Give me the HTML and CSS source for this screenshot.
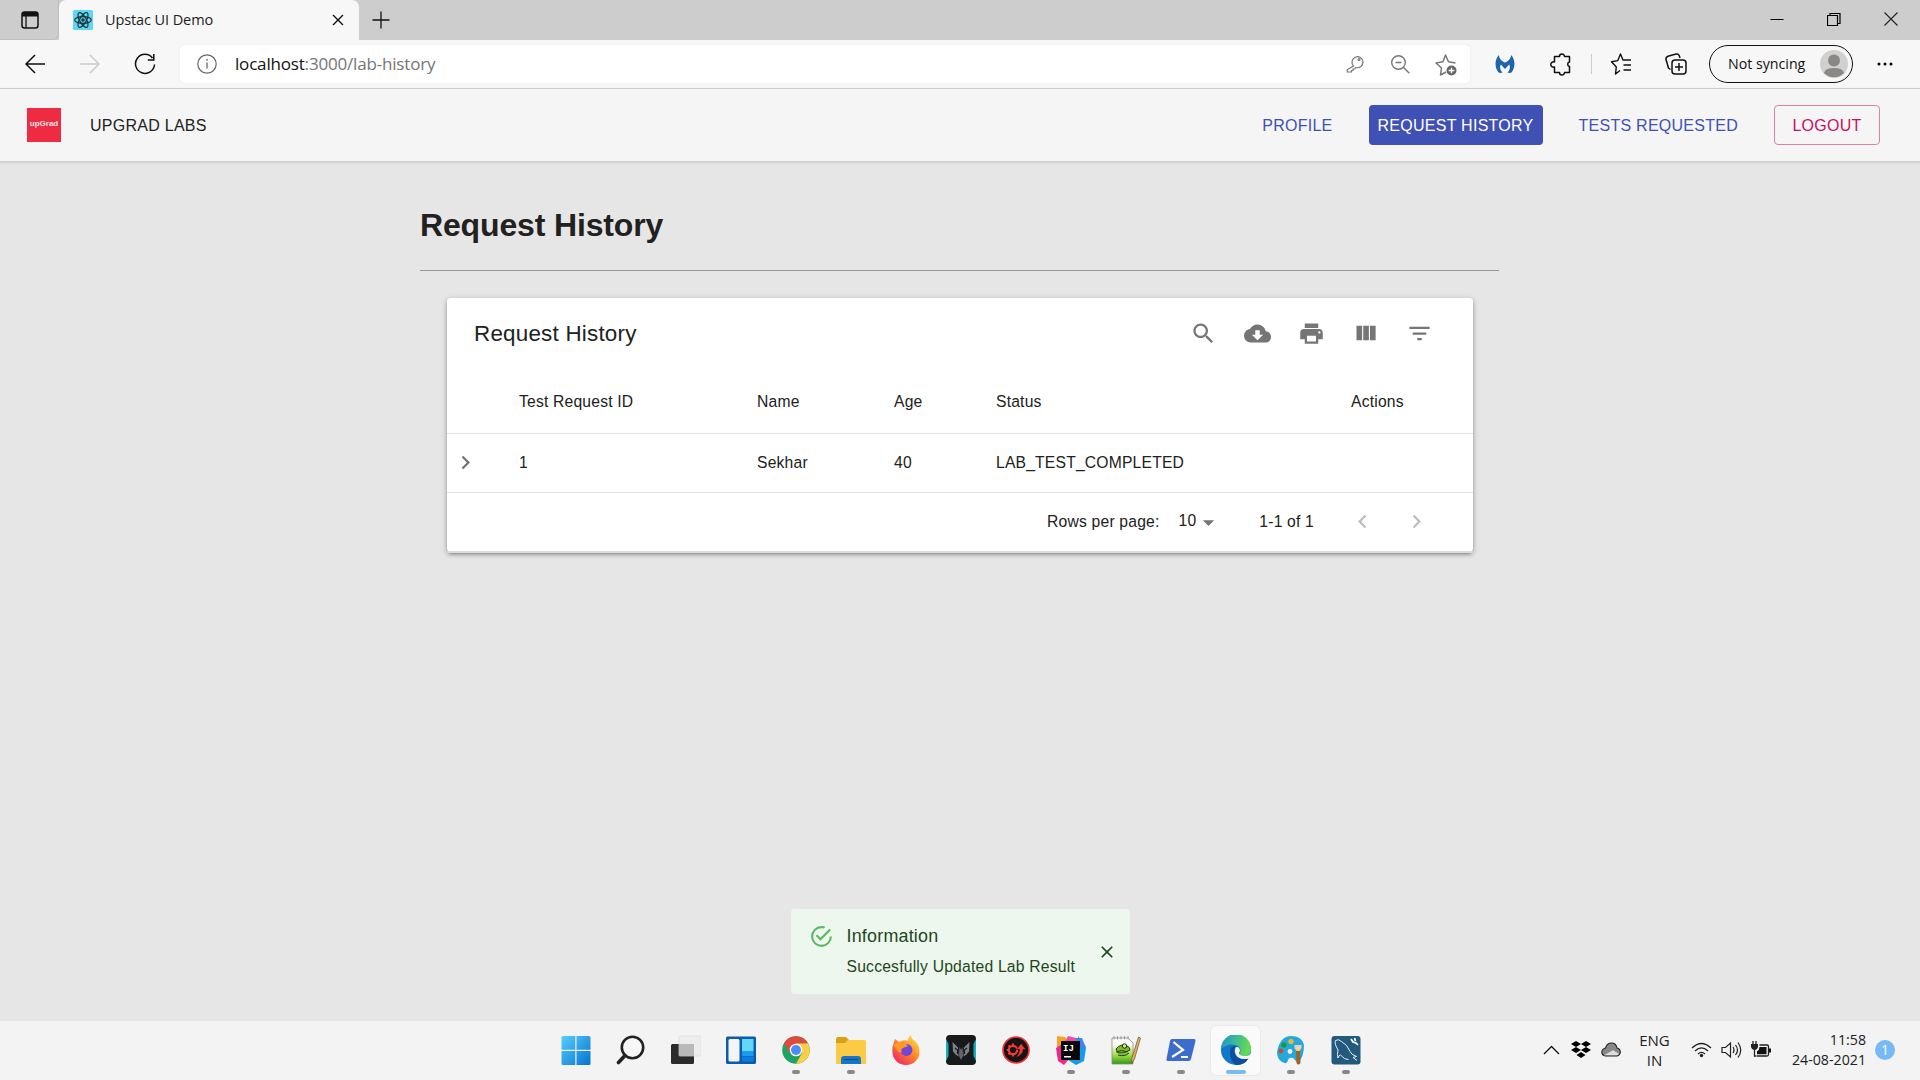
FILE: index.html
```html
<!DOCTYPE html>
<html lang="en">
<head>
<meta charset="utf-8">
<title>Upstac UI Demo</title>
<link rel="stylesheet" href="styles.css">
</head>
<body>
<div class="screen">
  <div class="tabbar">
    <div class="tab-actions"><svg width="20" height="20" viewBox="0 0 20 20"><rect x="2" y="2" width="16" height="16" rx="2.5" fill="none" stroke="#111" stroke-width="1.5"/><path d="M2 4q0-2 2-2h12q2 0 2 2v2.500H2z" fill="#111"/><path d="M6 6v12" stroke="#111" stroke-width="1.300"/></svg></div>
    <div class="tab">
      <svg class="favicon" width="20" height="20" viewBox="0 0 20 20"><rect width="20" height="20" rx="1.500" fill="#61d6f2"/><g fill="none" stroke="#16343d" stroke-width="1.200"><ellipse cx="10" cy="10" rx="8.300" ry="3.300"/><ellipse cx="10" cy="10" rx="8.300" ry="3.300" transform="rotate(60 10 10)"/><ellipse cx="10" cy="10" rx="8.300" ry="3.300" transform="rotate(120 10 10)"/></g><circle cx="10" cy="10" r="1.700" fill="#16343d"/></svg>
      <span class="tab-title">Upstac UI Demo</span>
      <svg class="tab-close" width="12" height="12" viewBox="0 0 12 12"><path d="M1 1l10 10M11 1L1 11" stroke="#111" stroke-width="1.400"/></svg>
    </div>
    <svg class="tab-new" width="18" height="18" viewBox="0 0 18 18"><path d="M9 .5v17M.5 9h17" stroke="#111" stroke-width="1.300"/></svg>
    <div class="window-controls">
      <svg width="14" height="14" viewBox="0 0 14 14"><path d="M.5 7.500h13" stroke="#000"/></svg>
      <svg width="14" height="14" viewBox="0 0 14 14"><path d="M.5 3.500h10v10H.5zM3 3.500v-2h10v10h-2.500" fill="none" stroke="#000" stroke-width="1.200"/></svg>
      <svg width="14" height="14" viewBox="0 0 14 14"><path d="M.5.5l13 13M13.500.5l-13 13" stroke="#222" stroke-width="1.100"/></svg>
    </div>
  </div>

  <div class="toolbar">
    <svg class="nav-icon" width="20" height="20" viewBox="0 0 20 20"><path d="M20 10H1M10 1l-9 9 9 9" fill="none" stroke="#111" stroke-width="1.500"/></svg>
    <svg class="nav-icon" width="20" height="20" viewBox="0 0 20 20"><path d="M0 10h19M10 1l9 9-9 9" fill="none" stroke="#ccc" stroke-width="1.500"/></svg>
    <svg class="nav-icon" width="22" height="22" viewBox="0 0 22 22"><path d="M20.500 11.500A9.500 9.500 0 1 1 18.500 5M19.800 1v6h-6" fill="none" stroke="#111" stroke-width="1.500"/></svg>
    <div class="address">
      <svg width="20" height="20" viewBox="0 0 20 20"><circle cx="10" cy="10" r="9.200" fill="none" stroke="#666" stroke-width="1.200"/><path d="M10 8.500v6" stroke="#666" stroke-width="1.300"/><circle cx="10" cy="5.800" r=".9" fill="#666"/></svg>
      <span class="url">localhost<span class="url-rest">:3000/lab-history</span></span>
      <div class="address-tools">
        <svg width="20" height="20" viewBox="0 0 20 20" fill="none" stroke="#777" stroke-width="1.200"><path d="M8 11.500a5.500 5.500 0 1 1 2.500 1.500L9 14.500H7.500V16H6v1.500H1.800V15z" transform="translate(-.5 .5)"/><circle cx="13" cy="5.500" r="1"/></svg>
        <svg width="20" height="20" viewBox="0 0 20 20" fill="none" stroke="#777" stroke-width="1.400"><circle cx="8.500" cy="8.500" r="6.800"/><path d="M13.300 13.300l6 6M5.500 8.500h6"/></svg>
        <svg width="24" height="24" viewBox="0 0 24 24" fill="none" stroke="#777" stroke-width="1.500" stroke-linejoin="round"><path d="M12 20l-5.500 3 1-7-5.500-5 7-1.200L11.500 3l3 6.800 7 1.200"/><circle cx="17.500" cy="18.500" r="5" fill="#666" stroke="none"/><path d="M17.500 15.700v5.600M14.700 18.500h5.600" stroke="#fff" stroke-width="1.300"/></svg>
      </div>
    </div>
    <div class="browser-tools">
      <svg class="ext-m" width="20" height="20" viewBox="0 0 20 20"><path d="M4 1C-.5 5-.5 14 3.500 18.500 5 19 6.500 19 7.500 18.500 5 16 4.500 13 5.800 10.500L10 15l4.200-4.500c1.300 2.500.8 5.500-1.700 8 1 .5 2.500.5 4 0C20.500 14 20.500 5 16 1c0 3.500-2.500 6-6 7.500C6.500 7 4 4.500 4 1z" fill="#1e64ad"/></svg>
      <svg class="ext-puzzle" width="24" height="24" viewBox="0 0 24 24"><path d="M5.500 4.500h5a2.500 2.500 0 0 1 5 0h5V10a2.300 2.300 0 0 0 0 4.500v6h-5a2.500 2.500 0 0 1-5 0h-5V15a2.700 2.700 0 1 1 0-5z" fill="none" stroke="#111" stroke-width="1.500" stroke-linejoin="round"/></svg>
      <span class="divider"></span>
      <svg class="fav" width="24" height="24" viewBox="0 0 24 24" fill="none" stroke="#111" stroke-width="1.400" stroke-linejoin="round"><path d="M11 18.500L6.500 22l.8-7L2.500 9.800l6.300-1.200L11.500 2l2.500 6h8M14.500 13H22M14.500 18H22"/></svg>
      <svg class="coll" width="24" height="24" viewBox="0 0 24 24" fill="none" stroke="#111" stroke-width="1.500"><rect x="8" y="8" width="14" height="14" rx="3"/><path d="M15 11v8M11 15h8M6.500 17.500L4.500 16 2 7.500Q1.700 5 4 4.200L12 2q2.500-.5 3.300 1.800L16 6"/></svg>
      <div class="profile"><span class="profile-label">Not syncing</span><svg width="28" height="28" viewBox="0 0 28 28"><circle cx="14" cy="14" r="14" fill="#d2d0ce"/><circle cx="14" cy="10.500" r="6" fill="#8a8886"/><path d="M4 23q1-5 10-5t10 5a14 14 0 0 1-20 0z" fill="#8a8886"/></svg></div>
      <svg class="more" width="18" height="6" viewBox="0 0 18 6"><circle cx="3" cy="3" r="1.500"/><circle cx="9" cy="3" r="1.500"/><circle cx="15" cy="3" r="1.500"/></svg>
    </div>
  </div>

  <header class="app-header">
    <div class="logo">upGrad</div>
    <span class="brand">UPGRAD LABS</span>
    <nav class="app-nav">
      <a class="nav-link">PROFILE</a>
      <a class="nav-link active">REQUEST HISTORY</a>
      <a class="nav-link tests">TESTS REQUESTED</a>
      <a class="nav-link logout">LOGOUT</a>
    </nav>
  </header>

  <main class="page">
    <h1>Request History</h1>
    <hr>
    <section class="paper">
      <div class="paper-toolbar">
        <h2>Request History</h2>
        <div class="actions">
          <svg viewBox="0 0 24 24"><path d="M15.500 14h-.79l-.28-.27C15.410 12.590 16 11.110 16 9.500 16 5.910 13.090 3 9.500 3S3 5.910 3 9.500 5.910 16 9.500 16c1.610 0 3.090-.59 4.230-1.570l.27.28v.79l5 4.990L20.490 19l-4.990-5zm-6 0C7.010 14 5 11.990 5 9.500S7.010 5 9.500 5 14 7.010 14 9.500 11.990 14 9.500 14z"/></svg>
          <svg viewBox="0 0 24 24"><path d="M19.350 10.040C18.670 6.590 15.640 4 12 4 9.110 4 6.600 5.640 5.350 8.040 2.340 8.360 0 10.910 0 14c0 3.310 2.690 6 6 6h13c2.760 0 5-2.240 5-5 0-2.640-2.050-4.780-4.650-4.960zM17 13l-5 5-5-5h3V9h4v4h3z"/></svg>
          <svg viewBox="0 0 24 24"><path d="M19 8H5c-1.660 0-3 1.340-3 3v6h4v4h12v-4h4v-6c0-1.660-1.340-3-3-3zm-3 11H8v-5h8v5zm3-7c-.55 0-1-.45-1-1s.45-1 1-1 1 .45 1 1-.45 1-1 1zm-1-9H6v4h12V3z"/></svg>
          <svg viewBox="0 0 24 24"><path d="M10 18h5V5h-5v13zm-6 0h5V5H4v13zM16 5v13h5V5h-5z"/></svg>
          <svg viewBox="0 0 24 24"><path d="M10 18h4v-2h-4v2zM3 6v2h18V6H3zm3 7h12v-2H6v2z"/></svg>
        </div>
      </div>
      <table>
        <colgroup><col class="c-expand"><col class="c-id"><col class="c-name"><col class="c-age"><col class="c-status"><col></colgroup>
        <thead><tr><th></th><th>Test Request ID</th><th>Name</th><th>Age</th><th>Status</th><th>Actions</th></tr></thead>
        <tbody><tr><td class="expand"><svg viewBox="0 0 24 24"><path d="M8.590 16.590L13.170 12 8.590 7.410 10 6l6 6-6 6-1.410-1.410z"/></svg></td><td>1</td><td>Sekhar</td><td>40</td><td>LAB_TEST_COMPLETED</td><td></td></tr></tbody>
      </table>
      <div class="pagination">
        <span class="rows-label">Rows per page:</span>
        <span class="rows-select">10</span>
        <svg class="caret" viewBox="0 0 24 24"><path d="M7 10l5 5 5-5z"/></svg>
        <span class="range">1-1 of 1</span>
        <svg class="page-btn" viewBox="0 0 24 24"><path d="M15.410 7.410L14 6l-6 6 6 6 1.410-1.410L10.830 12z"/></svg>
        <svg class="page-btn next" viewBox="0 0 24 24"><path d="M8.590 16.590L13.170 12 8.590 7.410 10 6l6 6-6 6-1.410-1.410z"/></svg>
      </div>
    </section>
    <div class="alert">
      <svg class="alert-icon" viewBox="0 0 24 24"><path d="M20,12A8,8 0 0,1 12,20A8,8 0 0,1 4,12A8,8 0 0,1 12,4C12.760,4 13.500,4.110 14.200,4.310L15.770,2.740C14.610,2.260 13.340,2 12,2A10,10 0 0,0 2,12A10,10 0 0,0 12,22A10,10 0 0,0 22,12M7.910,10.080L6.500,11.500L11,16L21,6L19.590,4.580L11,13.170L7.910,10.080Z"/></svg>
      <div class="alert-text"><strong>Information</strong><span>Succesfully Updated Lab Result</span></div>
      <svg class="alert-close" viewBox="0 0 24 24"><path d="M19 6.410L17.590 5 12 10.590 6.410 5 5 6.410 10.590 12 5 17.590 6.410 19 12 13.410 17.590 19 19 17.590 13.410 12z"/></svg>
    </div>
  </main>

  <footer class="taskbar">
    <div class="apps">
      <div class="app"><svg viewBox="0 0 30 30"><defs><linearGradient id="win" gradientUnits="userSpaceOnUse" x1="0" y1="0" x2="30" y2="30"><stop offset="0" stop-color="#5bd0fb"/><stop offset="1" stop-color="#0472d4"/></linearGradient></defs><path d="M.5 2.500q0-1.500 1.500-1.500h12.300v13.800H.5zM15.500 1h12.500q1.500 0 1.500 1.500v12.300h-14zM.5 16h13.800v14H2q-1.500 0-1.500-1.500zM15.500 16h14v12.500q0 1.500-1.500 1.500H15.500z" fill="url(#win)"/></svg></div>
      <div class="app"><svg viewBox="0 0 30 30"><circle cx="16.500" cy="12.500" r="10.700" fill="#f7f7f7" stroke="#222" stroke-width="2.600"/><path d="M9 20.500L2.500 27.500" stroke="#222" stroke-width="3.600" stroke-linecap="round"/></svg></div>
      <div class="app"><svg viewBox="0 0 30 30"><rect x="0" y="9" width="23" height="20" rx="1.500" fill="#2b2b2b"/><rect x="8" y="1" width="22" height="20" rx="1" fill="#ededed" stroke="#dcdcdc" stroke-width=".7"/><path d="M8 9h15v12H8z" fill="#b9b9b9"/></svg></div>
      <div class="app"><svg viewBox="0 0 30 30"><rect x="0" y="1.500" width="30" height="27.500" rx="1.500" fill="#0d5cab"/><rect x="2.500" y="4" width="11" height="22.500" rx="1.500" fill="#f2f4f7"/><path d="M16 4h11.500v12.500H16z" fill="#63d6fc"/><path d="M16 16.500h11.500v4.500H16z" fill="#1b9af0"/><path d="M16 21.500h11.500v5H16z" fill="#0a7fe0"/></svg></div>
      <div class="app running"><svg viewBox="0 0 30 30"><circle cx="15" cy="15" r="13.800" fill="#1ea362"/><path d="M15 8.200h12A13.800 13.800 0 0 1 15 28.800l6-10.500z" fill="#ffcd46"/><path d="M3 8.200l6 10.300L15 15V8.200h12A13.800 13.800 0 0 0 3 8.200z" fill="#dd4b3e"/><circle cx="15" cy="15" r="6.300" fill="#fff"/><circle cx="15" cy="15" r="5" fill="#4b8bf5"/></svg></div>
      <div class="app running"><svg viewBox="0 0 30 30"><path d="M0 4q0-2 2-2h8l3 3v5H0z" fill="#dda010"/><path d="M12 5h16.500q1.500 0 1.500 1.500V29H0V8h9z" fill="#fbcb45"/><path d="M5 29v-5q0-3 3-3h14q3 0 3 3v5z" fill="#1976c5"/><path d="M8 24.500h14" stroke="#0b4f8f" stroke-width="1.200"/></svg></div>
      <div class="app"><svg viewBox="0 0 30 30"><defs><linearGradient id="fox" x1="1" y1="0" x2=".2" y2="1"><stop offset="0" stop-color="#fff04a"/><stop offset=".5" stop-color="#ff8b27"/><stop offset="1" stop-color="#ef2267"/></linearGradient></defs><path d="M3 7l1-3 4 3q5-3 9-1 0-4 3-6 0 4 4 6 5 5 4.500 11A13.500 13 0 0 1 1.500 17Q1 11 3 7z" fill="url(#fox)"/><circle cx="15.500" cy="15" r="6" fill="#7048d8"/><path d="M2 10q4-4 10-2 4 1 5 3l-5 2q-3 2-1 4-4 1-5-2z" fill="#ff962b"/></svg></div>
      <div class="app"><svg viewBox="0 0 30 30"><rect width="30" height="30" rx="4" fill="#17191b"/><path d="M0 4v22l2.500-5V9zM30 4v22l-2.500-5V9z" fill="#14aebc"/><path d="M6.500 7L12 12.500l.5 9-3-2-2.500-3zM23.500 7L18 12.500l-.5 9 3-2 2.500-3z" fill="#7d8185"/><path d="M13.500 12l1.500 3 1.500-3 .5 9-2 4-2-4z" fill="#63676b"/><path d="M9 13l2.500 2v4M21 13l-2.500 2v4" fill="none" stroke="#17191b" stroke-width="1.200"/></svg></div>
      <div class="app"><svg viewBox="0 0 30 30"><circle cx="15" cy="15" r="13" fill="#181415" stroke="#f03537" stroke-width="1.700"/><circle cx="12" cy="15" r="4.200" fill="none" stroke="#ef3b38" stroke-width="2.200"/><path d="M12 8.500v2.500M12 19v2.500M5.800 15h2.500M7.500 10.500l2 2M7.500 19.500l2-2" stroke="#ef3b38" stroke-width="2.200"/><path d="M20 8.500l5 6h-2.800q0 5.500-7.700 8 4.500-4 4-8h-3z" fill="#ef3b38" stroke="#181415" stroke-width=".6"/></svg></div>
      <div class="app running"><svg viewBox="0 0 30 30"><path d="M1 1l8 1 3 4-5 10-6-2z" fill="#f8a323"/><path d="M0 13l8-5 5 16-5 6-6-4z" fill="#f1268b"/><path d="M12 1l8 2v6H8z" fill="#f448a6"/><path d="M20 3l6 0 4 10-2 13-8 4-8-5 8-13z" fill="#139bec"/><path d="M22 1l8 11-7 1z" fill="#4f79ee"/><rect x="5" y="6" width="19" height="19" fill="#080808"/><rect x="8" y="21" width="7" height="1.500" fill="#fff"/><text x="7" y="16" class="ij">IJ</text></svg></div>
      <div class="app running"><svg viewBox="0 0 30 30"><defs><linearGradient id="note" x1="0" y1="0" x2="0" y2="1"><stop offset=".25" stop-color="#fff"/><stop offset=".65" stop-color="#a5dc4d"/><stop offset="1" stop-color="#2f9a0e"/></linearGradient></defs><path d="M1 3h16l5 5v21H1z" fill="url(#note)" stroke="#888" stroke-width=".8"/><path d="M3 1v3.500M6.500 1v3.500M10 1v3.500M13.500 1v3.500M17 1v3.500" stroke="#888" stroke-width=".8"/><path d="M5 14q5-6 11-3 3 1 3 4-5 4-12 3zM5 17q5-3 12 0M7 20q7 2 11-2" fill="#7dbb2a" stroke="#263e16"/><circle cx="13.500" cy="11" r="2.200" fill="#dff06b" stroke="#222"/><path d="M27.500 2l2 1-6 21-2.500 4-.3-4.500z" fill="#ddb05e" stroke="#73522b" stroke-width=".7"/></svg></div>
      <div class="app running"><svg viewBox="0 0 30 30"><path d="M5 4h23q2 0 1.500 2L25 24q-.5 2-2.500 2H1.500Q.2 26 .5 24L4 6q.3-2 2-2z" fill="#3e6ccc"/><path d="M7.500 7l9.500 8-11 7M15 22h7" fill="none" stroke="#fff" stroke-width="2.200"/></svg></div>
      <div class="app running current"><svg viewBox="0 0 30 30"><defs><linearGradient id="edge" x1="0" y1="0" x2="1" y2=".25"><stop offset="0" stop-color="#1694d7"/><stop offset="1" stop-color="#64db55"/></linearGradient></defs><circle cx="15" cy="15" r="15" fill="#1278ca"/><path d="M0 14A15 15 0 0 1 30 14q0 6-6 7-6 0-5-3 2-7-5-8Q7 8 0 14z" fill="url(#edge)"/><path d="M9 17q0-7 6-6-3 3-1 8 3 6 13 5-3 6-12 6-6-4-6-13z" fill="#0b4f9d"/><path d="M14.500 12.500q3.500-1.500 4.500 2.500 0 2-1 3 .5 3 6 3 3.500 0 6-2.500-.5 3-2.500 5-6 1.500-10-1-5-3.500-3-10z" fill="#f8f8f8"/></svg></div>
      <div class="app running"><svg viewBox="0 0 30 30"><path d="M28 10q-2-9-13-9T1 17q0 7 5 10 5 3 6-2 1-3 5-2l5 5q6-6 6-18z" fill="#27a8dd"/><circle cx="8" cy="10" r="2.600" fill="#159a2e"/><circle cx="15" cy="6.500" r="2.600" fill="#f5ba21"/><circle cx="5" cy="16" r="2.400" fill="#c84b2d"/><circle cx="14" cy="16.500" r="2.400" fill="#f3f3f3"/><path d="M20 15h4l.5 13q-2.500 3-4 0z" fill="#9f6229"/><path d="M18.500 10h7v3l-2 3h-3l-2-3z" fill="#efd1aa"/></svg></div>
      <div class="app running"><svg viewBox="0 0 30 30"><rect x=".5" y="1" width="29" height="28.500" rx="3" fill="#22597c"/><path d="M7 23q-1-3 0-8Q3 8 4.500 5.500q3-2 6 1 6 3 8.500 10 1 3 6.500 5l-3.500 1 4 3M7 23q1-3 2.500-3 4 5 8 4.500" fill="none" stroke="#e9f1f5" stroke-width="1"/><path d="M20 4l2 3 3 1 2 2M23.500 3l1 3" fill="none" stroke="#fff" stroke-width="1.700"/></svg></div>
    </div>
    <div class="tray">
      <div class="tray-icon"><svg width="17" height="10" viewBox="0 0 17 10"><path d="M1 9l7.500-7.500L16 9" fill="none" stroke="#111" stroke-width="1.300"/></svg></div>
      <div class="tray-icon box"><svg width="20" height="18" viewBox="0 0 20 18"><path d="M5 0l5 3-5 3-5-3zM15 0l5 3-5 3-5-3zM5 6l5 3-5 3-5-3zM15 6l5 3-5 3-5-3zM10 11l4.500 3L10 17l-4.500-3z"/></svg></div>
      <div class="tray-icon cloud"><svg width="20" height="15" viewBox="0 0 20 15"><path d="M4.500 14Q.8 13.500.8 10 1 7 4.500 6 6 1 10.500 1q4.500 0 5.500 5 3.300.5 3.300 4.300-.3 3.200-3.300 3.700z" fill="#888" stroke="#222" stroke-width="1.100"/><path d="M3 13.300l9-5 6 3.500q-.8 1.500-2 1.500z" fill="#ddd"/></svg></div>
      <div class="lang"><span>ENG</span><span>IN</span></div>
      <div class="tray-icon wifi"><svg width="21" height="16" viewBox="0 0 21 16" fill="none" stroke="#222" stroke-width="1.300"><path d="M1 6q9.500-9 19 0M4 9q6.500-6.300 13 0M7 12q3.500-3.300 7 0"/><circle cx="10.500" cy="13.500" r="1.700" fill="#222" stroke="none"/></svg></div>
      <div class="tray-icon"><svg width="21" height="18" viewBox="0 0 21 18" fill="none" stroke="#222" stroke-width="1.200"><path d="M1 6.500h3.500L9.500 2v14l-5-4.500H1zM12 6q2 3 0 6M14.500 4q4 5 0 10M17 1.500q5.500 7.500 0 15"/></svg></div>
      <div class="tray-icon"><svg width="20" height="17" viewBox="0 0 20 17"><path d="M2 0v4M5 0v4" stroke="#222" stroke-width="1.300"/><path d="M0 3h7v3q-1 3-3.500 3T0 6z" fill="#222"/><path d="M3.500 9v6H5M8.500 4H16q1.500 0 1.500 1.500v8q0 1.500-1.500 1.500H5.500" fill="none" stroke="#222" stroke-width="1.300"/><path d="M8.500 6h7v7.200H6v-3q2.500-1 2.500-4.200zM18 7.500h2v4h-2z" fill="#111"/></svg></div>
      <div class="clock"><span>11:58</span><span class="date">24-08-2021</span></div>
      <div class="notif">1</div>
    </div>
  </footer>
</div>
</body>
</html>
```
FILE: styles.css
```css
* { box-sizing: border-box; }
body { margin: 0; overflow: hidden; font-family: "Liberation Sans", Arial, sans-serif; color: #212121; }
svg { display: block; flex: none; }
.screen { width: 1920px; height: 1080px; display: flex; flex-direction: column; background: #e6e6e6; }

/* Browser frame */
.tabbar { height: 40px; flex: none; display: flex; align-items: center; background: #cdcdcd; font-family: "Open Sans", "Noto Sans", sans-serif; }
.tab-actions { width: 59px; height: 40px; padding: 10px 0 0 20px; border-radius: 0 0 6px 0; border-right: 1px solid #bebebe; border-bottom: 1px solid #bebebe; }
.tab { width: 300px; height: 40px; display: flex; align-items: center; padding: 0 15px 0 14px; background: #f7f7f7; border-radius: 7px 7px 0 0; }
.tab-title { margin-left: 12px; padding-bottom: 2px; font-size: 14.500px; letter-spacing: -.1px; color: #222; white-space: nowrap; }
.tab-close { margin-left: auto; }
.tab-new { margin-left: 13px; }
.window-controls { margin-left: auto; display: flex; gap: 43px; padding: 0 22px 3px 0; }

.toolbar { height: 49px; flex: none; display: flex; align-items: center; padding-left: 25px; background: #f7f7f7; border-bottom: 1px solid #cbcbcb; font-family: "Open Sans", "Noto Sans", sans-serif; }
.nav-icon { margin-right: 35px; }
.nav-icon + .nav-icon + .nav-icon { margin: 0 24px 0 -1px; }
.address { width: 1290px; height: 38px; flex: none; display: flex; align-items: center; padding: 0 12px 0 17px; background: #fff; border-radius: 5px; box-shadow: 0 0 3px #eaeaea; }
.url { margin-left: 18px; padding-bottom: 2px; font-size: 17px; letter-spacing: -.18px; color: #111; white-space: nowrap; }
.url-rest { color: #757575; }
.address-tools { margin-left: auto; display: flex; align-items: center; gap: 24px; }
.browser-tools { display: flex; align-items: center; }
.ext-m { margin-left: 25px; }
.ext-puzzle { margin-left: 34px; }
.divider { width: 1px; height: 20px; margin-left: 18px; background: #ccc; }
.fav { margin-left: 17px; }
.coll { margin-left: 31px; }
.profile { width: 144px; height: 38px; margin-left: 21px; padding: 0 4px 0 17px; display: flex; align-items: center; justify-content: space-between; border: 1.500px solid #111; border-radius: 19px; }
.profile-label { padding: 0 0 1px 1px; font-size: 14.200px; color: #111; white-space: nowrap; }
.more { margin-left: 23px; }

/* Application header */
.app-header { height: 72px; flex: none; display: flex; align-items: center; padding: 0 40px 0 27px; background: #f5f5f5; box-shadow: 0 1px 2px 1px #cfcfcf; font-size: 16px; letter-spacing: .26px; }
.logo { width: 34px; height: 34px; background: #ef2b41; color: #ffe5e8; font: bold 8px/32px "Liberation Sans", sans-serif; text-align: center; letter-spacing: 0; }
.brand { margin-left: 29px; padding-top: 1px; }
.app-nav { margin-left: auto; display: flex; align-items: center; }
.nav-link { height: 40px; line-height: 41px; color: #3f51b5; white-space: nowrap; }
.active { width: 174px; margin: 0 36px; text-align: center; background: #3f51b5; color: #fff; border-radius: 4px; }
.logout { width: 106px; margin-left: 36px; line-height: 39px; text-align: center; color: #c51162; border: 1px solid #df7fab; border-radius: 4px; }

/* Page content */
.page { flex: 1; width: 1080px; margin: 0 auto; display: flex; flex-direction: column; }
h1 { margin: 44px 0 0; font-size: 32px; line-height: 40px; letter-spacing: -.15px; }
hr { width: 1079px; margin: 25px 0 27px; border: 0; height: 1px; background: #989898; }
.paper { width: 1026px; height: 254px; margin: 0 27px; background: #fff; border-radius: 4px; box-shadow: 0 3px 3px -2px rgba(0,0,0,.3), 0 3px 4px rgba(0,0,0,.2), 0 1px 7px rgba(0,0,0,.18); font-size: 15.680px; letter-spacing: .19px; }
.paper-toolbar { height: 70px; display: flex; align-items: center; padding: 0 40px 0 27px; }
h2 { margin: 0; padding-top: 1px; font-size: 22.400px; font-weight: 400; letter-spacing: .22px; }
.actions { margin-left: auto; display: flex; gap: 27px; }
.actions svg, .expand svg, .caret, .page-btn { width: 27px; height: 27px; fill: #757575; }
table { width: 1026px; border-collapse: collapse; table-layout: fixed; }
.c-expand { width: 72px; }
.c-id { width: 238px; }
.c-name { width: 137px; }
.c-age { width: 102px; }
.c-status { width: 355px; }
th, td { padding: 0; text-align: left; font-weight: 400; border-bottom: 1px solid #e0e0e0; }
th { height: 65px; padding-top: 3px; }
td { height: 59px; }
.expand svg { margin-left: 5px; }
.pagination { height: 60px; display: flex; align-items: center; justify-content: flex-end; padding-right: 43px; border-bottom: 2px solid #dcdcdc; }
.rows-label { margin-right: 19px; }
.rows-select { padding-bottom: 2px; }
.caret { margin: 2px 37px 0 -1px; }
.range { margin-right: 35px; }
.page-btn { margin-right: 27px; fill: #bdbdbd; }
.next { margin-right: 0; }
.alert { width: 339px; height: 85px; margin: auto auto 27px; display: flex; align-items: center; padding: 0 13px 0 18px; background: #edf7ed; color: #1e4620; border-radius: 4px; }
.alert-icon { width: 25px; height: 25px; margin-bottom: 31px; fill: #5cb660; }
.alert-text { margin-left: 13px; display: flex; flex-direction: column; gap: 11px; font-size: 15.680px; line-height: 20px; letter-spacing: .21px; white-space: nowrap; margin-bottom: 0; }
.alert-text strong { font-size: 17.920px; font-weight: 400; }
.alert-close { width: 20px; height: 20px; margin-left: auto; fill: #1e4620; }

/* Taskbar */
.taskbar { height: 59px; flex: none; display: flex; padding-left: 548px; background: #f3f3f3; font-family: "Open Sans", "Noto Sans", sans-serif; color: #222; }
.apps { display: flex; }
.app { width: 49px; height: 49px; margin: 5px 3px; padding: 9px 0 0; display: flex; flex-direction: column; align-items: center; border-radius: 5px; }
.app svg { width: 30px; height: 30px; }
.running::after { content: ""; width: 8px; height: 4px; margin-top: 5px; border-radius: 2px; background: #888; }
.current { background: #fafafa; box-shadow: 0 0 1px 1px #e9e9e9; }
.current::after { width: 20px; background: #76b9f5; }
.ij { font: bold 9px "Liberation Mono", monospace; fill: #fff; }
.tray { margin-left: auto; display: flex; align-items: center; padding: 0 25px 2px 0; }
.tray-icon { width: 30px; display: flex; justify-content: center; }
.box { width: 29px; }
.cloud { width: 32px; }
.lang { width: 55px; display: flex; flex-direction: column; align-items: center; font-size: 15px; line-height: 20px; }
.wifi { margin-left: 4px; }
.clock { width: 90px; display: flex; flex-direction: column; align-items: flex-end; font-size: 14.200px; line-height: 20px; white-space: nowrap; }
.notif { width: 20px; height: 20px; margin-left: 9px; border-radius: 50%; background: #76b9f5; color: #fff; font-size: 14px; line-height: 20px; text-align: center; }
```
